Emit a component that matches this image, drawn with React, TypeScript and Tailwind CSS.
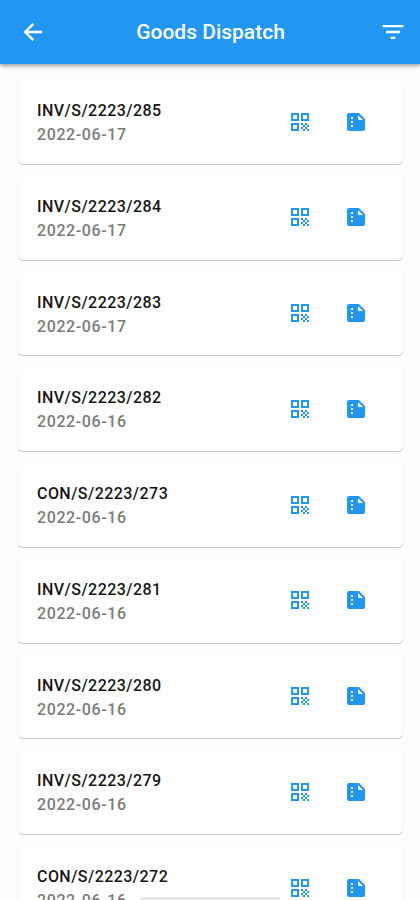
import { MdFilterList, MdQrCode } from "react-icons/md";

interface Dispatch {
  code: string;
  date: string;
}

const dispatches: Dispatch[] = [
  { code: "INV/S/2223/285", date: "2022-06-17" },
  { code: "INV/S/2223/284", date: "2022-06-17" },
  { code: "INV/S/2223/283", date: "2022-06-17" },
  { code: "INV/S/2223/282", date: "2022-06-16" },
  { code: "CON/S/2223/273", date: "2022-06-16" },
  { code: "INV/S/2223/281", date: "2022-06-16" },
  { code: "INV/S/2223/280", date: "2022-06-16" },
  { code: "INV/S/2223/279", date: "2022-06-16" },
  { code: "CON/S/2223/272", date: "2022-06-16" },
];

function BackIcon() {
  return (
    <svg width="24" height="24" viewBox="0 0 24 24" fill="none" stroke="currentColor" strokeWidth="2.4">
      <path d="M21 12H4.2M12.3 3.9L4.2 12l8.1 8.1" />
    </svg>
  );
}

function SummaryIcon() {
  return (
    <svg width="24" height="24" viewBox="0 0 24 24" fill="currentColor">
      <path
        fillRule="evenodd"
        d="M15 3H5a2 2 0 0 0-2 2v14a2 2 0 0 0 2 2h14a2 2 0 0 0 2-2V9l-6-6zM7 7h2v2H7V7zM7 11h2v2H7v-2zM7 15h2v2H7v-2zM14 10V5l5 5h-5z"
      />
    </svg>
  );
}

function DispatchCard({ item }: { item: Dispatch }) {
  return (
    <li className="flex h-[84.25px] shrink-0 items-center rounded-[5px] bg-white pl-[19px] pr-[35px] shadow-[0_1px_1px_rgba(0,0,0,0.18),0_1px_2px_rgba(0,0,0,0.06)]">
      <div className="flex-1 pt-[2px]">
        <div className="text-[16px] leading-6 font-medium tracking-[0.45px] text-[#161616]">{item.code}</div>
        <div className="text-[16px] leading-[23px] font-medium tracking-[0.6px] text-[#7c7c7c]">{item.date}</div>
      </div>
      <div className="flex gap-8 text-[#2196f3]">
        <button aria-label="Show QR code">
          <MdQrCode size={24} />
        </button>
        <button aria-label="Show summary">
          <SummaryIcon />
        </button>
      </div>
    </li>
  );
}

export default function App() {
  return (
    <div className="relative flex h-[900px] w-[420px] flex-col overflow-hidden bg-[#fefefe] font-['Roboto',sans-serif]">
      <header className="z-10 flex h-16 shrink-0 items-center justify-between bg-[#2196f3] pl-[21px] pr-[13px] text-white shadow-[0_2px_4px_rgba(0,0,0,0.38)]">
        <button aria-label="Back">
          <BackIcon />
        </button>
        <h1 className="mr-[3px] pt-[2px] text-[21px] font-medium">Goods Dispatch</h1>
        <button aria-label="Filter">
          <MdFilterList size={28} />
        </button>
      </header>

      <ul className="flex min-h-0 flex-1 flex-col gap-[11.5px] overflow-hidden pt-[15.5px] pr-[17px] pl-[18px]">
        {dispatches.map((item) => (
          <DispatchCard key={item.code} item={item} />
        ))}
      </ul>

      {/* system gesture bar */}
      <div className="absolute bottom-0 left-[141px] h-[3px] w-[139px] bg-[#e8e8e8]" />
    </div>
  );
}
